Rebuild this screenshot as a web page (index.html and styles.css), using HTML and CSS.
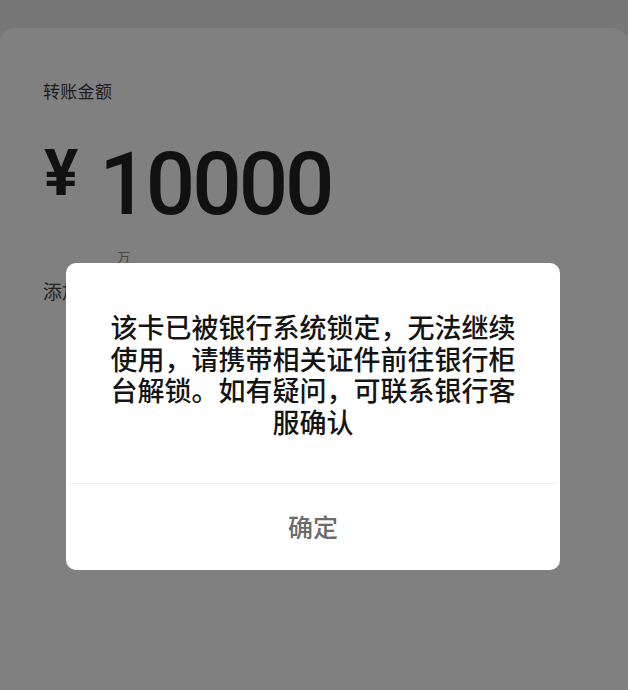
FILE: index.html
```html
<!DOCTYPE html>
<html lang="zh-CN">
<head>
<meta charset="utf-8">
<link rel="stylesheet" href="styles.css">
</head>
<body>
<div class="screen">
  <div class="topband"></div>
  <div class="card">
    <div class="label">转账金额</div>
    <div class="amount">
      <span class="yen">¥</span>
      <span class="num">10000</span>
    </div>
    <div class="unit">万</div>
    <div class="add">添加转账说明</div>
  </div>
  <div class="dialog">
    <div class="msg">该卡已被银行系统锁定，无法继续使用，请携带相关证件前往银行柜台解锁。如有疑问，可联系银行客服确认</div>
    <div class="divider"></div>
    <div class="btn">确定</div>
  </div>
</div>
</body>
</html>
```
FILE: styles.css
```css
html, body {
  margin: 0;
  padding: 0;
  background: #808080;
}
.screen {
  position: relative;
  width: 628px;
  height: 690px;
  overflow: hidden;
  background: #777777;
  font-family: "Noto Sans CJK SC", "Noto Sans", sans-serif;
}
.topband {
  height: 28px;
}
.card {
  background: #808080;
  border-radius: 14px 16px 0 0;
  height: 662px;
  padding: 50px 0 0 43px;
  box-sizing: border-box;
}
.label {
  font-size: 17px;
  line-height: 26px;
  color: #1c1c1c;
  letter-spacing: 0.3px;
}
.amount {
  display: flex;
  align-items: flex-start;
  margin-top: 30px;
  height: 100px;
}
.yen {
  font-family: Roboto, "DejaVu Sans", sans-serif;
  font-weight: bold;
  font-size: 64px;
  line-height: 70px;
  color: #111;
  margin-left: 1px;
  margin-top: 5px;
}
.num {
  font-family: Roboto, "Noto Sans", sans-serif;
  font-weight: 500;
  font-size: 87px;
  line-height: 100px;
  color: #111;
  margin-left: 21px;
  letter-spacing: -3px;
}
.unit {
  font-size: 13px;
  line-height: 16px;
  color: #444;
  margin-left: 74px;
  margin-top: 15px;
}
.add {
  font-size: 19px;
  line-height: 24px;
  color: #222;
  margin-top: 14px;
}
.dialog {
  position: absolute;
  left: 66px;
  top: 263px;
  width: 494px;
  height: 307px;
  background: #ffffff;
  border-radius: 10px;
  display: flex;
  flex-direction: column;
}
.msg {
  padding: 48px 40px 0 40px;
  height: 172px;
  box-sizing: border-box;
  font-size: 27px;
  line-height: 31.5px;
  font-weight: 500;
  color: #141414;
  text-align: center;
}
.divider {
  height: 1px;
  background: #ececec;
  margin: 48px 4px 0 4px;
}
.btn {
  flex: 1;
  display: flex;
  align-items: center;
  justify-content: center;
  font-size: 25px;
  font-weight: 500;
  color: #6b6b6b;
  padding-bottom: 2px;
}
```
